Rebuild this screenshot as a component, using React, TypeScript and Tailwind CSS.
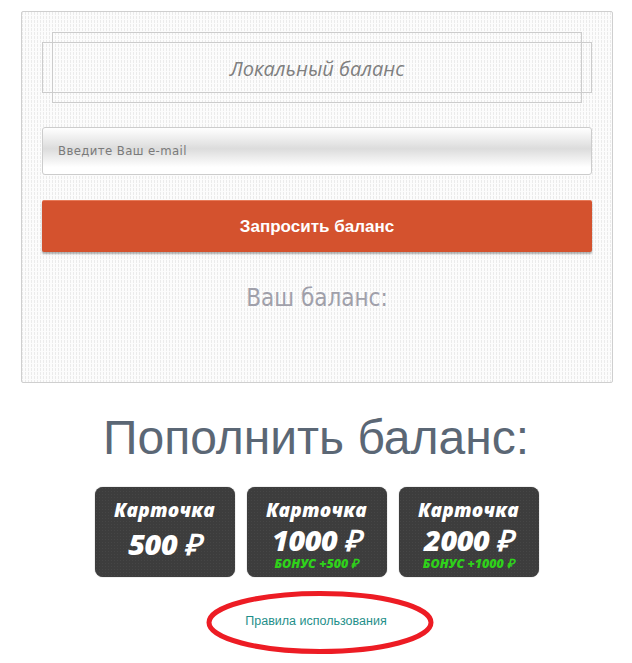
import React from "react";

function Card({ amount, bonus }: { amount: string; bonus?: string }) {
  return (
    <div className="relative w-[140px] h-[90px] rounded-[8px] bg-[#3d3d3d] shadow-[0_0_1px_rgba(0,0,0,0.6)] flex flex-col items-center overflow-hidden [font-family:'Open_Sans',sans-serif] italic text-white">
      <div className="absolute inset-0 bg-[radial-gradient(#4a4a4a_0.6px,transparent_0.8px)] bg-[length:3px_3px] opacity-70" />
      <div className="relative mt-[13px] text-[19px] font-extrabold leading-[20px] tracking-[0.2px]">Карточка</div>
      <div className={`relative ${bonus ? "mt-[5px]" : "mt-[9px]"} text-[29px] font-extrabold leading-[30px] tracking-[-0.5px]`}>{amount}</div>
      {bonus && (
        <div className="relative mt-[2px] text-[12.5px] font-extrabold leading-[14px] text-[#2fd21a]">{bonus}</div>
      )}
    </div>
  );
}

export default function App() {
  return (
    <div className="w-[632px] h-[663px] bg-white relative [font-family:'Liberation_Sans',Arial,sans-serif]">
      <div className="pt-[11px] pl-[21px]">
        <div className="w-[592px] h-[372px] border border-[#cfcfcf] rounded-[2px] px-[20px] pt-[20px] bg-[#fcfcfc] bg-[linear-gradient(0deg,#fcfcfc_1px,transparent_1px),linear-gradient(90deg,#ebebeb_1px,transparent_1px)] bg-[length:3px_4px]">
          <div className="relative h-[71px] mx-[10px] border border-[#cccccc] flex items-center justify-center">
            <div className="absolute left-[-11px] right-[-11px] top-[9px] bottom-[9px] border border-[#cccccc]" />
            <span className="relative mt-[2px] text-[20px] italic text-[#7f7f7f] [font-family:'Open_Sans',sans-serif]">Локальный баланс</span>
          </div>
          <div className="mt-[24px] h-[48px] rounded-[3px] border border-[#cccccc] bg-[linear-gradient(180deg,#ffffff_0%,#dcdcdc_45%,#ffffff_85%,#ffffff_100%)] flex items-center px-[15px]">
            <span className="text-[13px] tracking-[0.4px] text-[#7a7a7a] [font-family:'DejaVu_Sans_Condensed','DejaVu_Sans',sans-serif]">Введите Ваш e-mail</span>
          </div>
          <div className="mt-[25px] h-[52px] rounded-[2px] bg-[#d4522e] border-t border-t-[#e77a58] shadow-[0_2px_2px_rgba(0,0,0,0.3)] flex items-center justify-center">
            <span className="text-[17px] font-bold text-white">Запросить баланс</span>
          </div>
          <div className="mt-[28px] text-center text-[24px] text-[#a0a0aa] [font-family:'DejaVu_Sans_Condensed','DejaVu_Sans',sans-serif]">Ваш баланс:</div>
        </div>
      </div>
      <div className="mt-[27px] text-center text-[48px] leading-[56px] text-[#5b6775]">Пополнить баланс:</div>
      <div className="mt-[21px] flex justify-center gap-[12px] pl-[1px]">
        <Card amount="500 ₽" />
        <Card amount="1000 ₽" bonus="БОНУС +500 ₽" />
        <Card amount="2000 ₽" bonus="БОНУС +1000 ₽" />
      </div>
      <div className="mt-[35px] text-center text-[12.5px] text-[#1f8f8a]">Правила использования</div>
      <svg className="absolute left-[205px] top-[590px]" width="230" height="66" viewBox="0 0 230 66">
        <ellipse cx="115" cy="32.5" rx="111" ry="29" fill="none" stroke="#ed1c24" strokeWidth="5" />
      </svg>
    </div>
  );
}
